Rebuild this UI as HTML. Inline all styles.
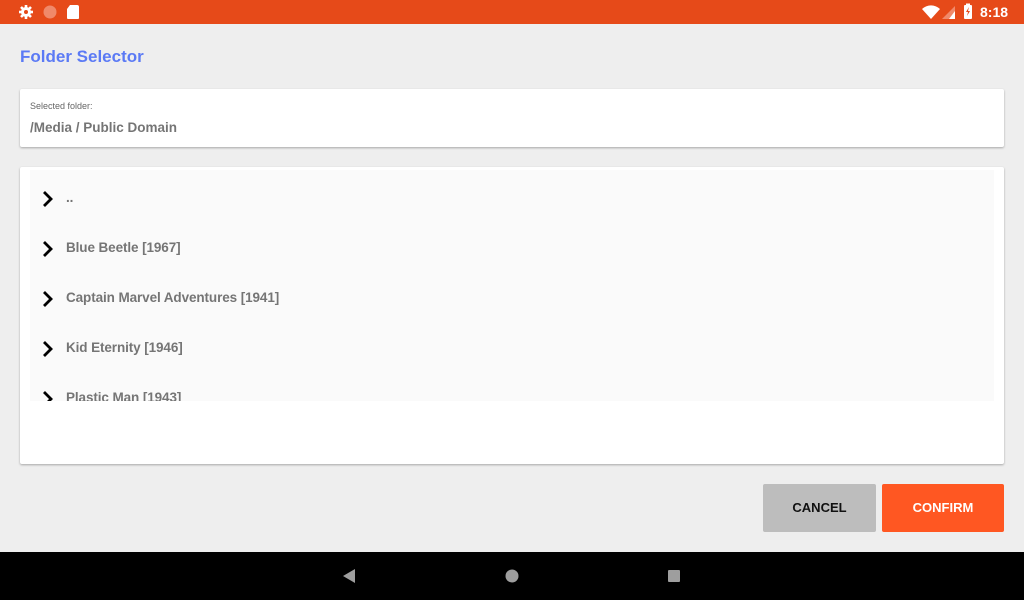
<!DOCTYPE html>
<html><head><meta charset="utf-8"><style>
*{margin:0;padding:0;box-sizing:border-box}
body{width:1024px;height:600px;background:#eeeeee;font-family:"Liberation Sans",sans-serif;position:relative;overflow:hidden}
.sb{position:absolute;left:0;top:0;width:1024px;height:24px;background:#e64a19}
.nav{position:absolute;left:0;top:552px;width:1024px;height:48px;background:#000}
.title{position:absolute;left:20px;top:47px;font-size:17px;font-weight:bold;color:#5b7af5}
.card{position:absolute;background:#fff;border-radius:2px;box-shadow:0 1px 2px rgba(0,0,0,.3)}
.item{position:absolute;left:0;width:900px;height:50px;font-size:13.5px;letter-spacing:-0.1px;font-weight:bold;color:#757575;white-space:nowrap}
.item svg{position:absolute;left:9px;top:0}
.item span{position:absolute;left:36px;top:1px}
.btn{position:absolute;top:484px;height:48px;border-radius:2px;font-size:13px;font-weight:bold;text-align:center;line-height:48px}
</style></head><body>
<div class="sb">
<svg width="1024" height="24" style="position:absolute;left:0;top:0">
<g fill="#fff">
<circle cx="26" cy="12" r="5"/>
<g stroke="#fff" stroke-width="2.6"><line x1="26" y1="5" x2="26" y2="19"/><line x1="19" y1="12" x2="33" y2="12"/><line x1="21" y1="7" x2="31" y2="17"/><line x1="31" y1="7" x2="21" y2="17"/></g>
<circle cx="26" cy="12" r="2" fill="#e64a19"/>
<circle cx="50" cy="12" r="6.5" fill="#f0896a"/>
<path d="M70 5h7a2 2 0 0 1 2 2v11a1 1 0 0 1-1 1h-10a1 1 0 0 1-1-1v-9z"/>
<path d="M922 9a13 13 0 0 1 18 0l-9 10z"/>
<path d="M955 6v13h-13z" fill="#f0896a"/>
<path d="M955 11v8h-6z"/>
<rect x="964" y="5" width="8" height="14" rx="1"/>
<rect x="966" y="3.5" width="4" height="2"/>
<path d="M969 7l-3 5h2l-1 4 3-5h-2z" fill="#e64a19"/>
</g>
<text x="980" y="17" fill="#fff" font-size="14" font-weight="bold" font-family="Liberation Sans">8:18</text>
</svg>
</div>
<div class="title">Folder Selector</div>
<div class="card" style="left:20px;top:89px;width:984px;height:58px">
<div style="position:absolute;left:10px;top:12px;font-size:9px;color:#666">Selected folder:</div>
<div style="position:absolute;left:10px;top:31px;font-size:13.5px;font-weight:bold;color:#757575">/Media / Public Domain</div>
</div>
<div class="card" style="left:20px;top:167px;width:984px;height:297px">
<div style="position:absolute;left:10px;top:3px;width:964px;height:231px;background:#fafafa;overflow:hidden">
<div class="item" style="top:19px"><svg width="20" height="20" viewBox="0 0 20 20"><path d="M5 3l7 7-7 7" fill="none" stroke="#000" stroke-width="2.8"/></svg><span>..</span></div>
<div class="item" style="top:69px"><svg width="20" height="20" viewBox="0 0 20 20"><path d="M5 3l7 7-7 7" fill="none" stroke="#000" stroke-width="2.8"/></svg><span>Blue Beetle [1967]</span></div>
<div class="item" style="top:119px"><svg width="20" height="20" viewBox="0 0 20 20"><path d="M5 3l7 7-7 7" fill="none" stroke="#000" stroke-width="2.8"/></svg><span>Captain Marvel Adventures [1941]</span></div>
<div class="item" style="top:169px"><svg width="20" height="20" viewBox="0 0 20 20"><path d="M5 3l7 7-7 7" fill="none" stroke="#000" stroke-width="2.8"/></svg><span>Kid Eternity [1946]</span></div>
<div class="item" style="top:219px"><svg width="20" height="20" viewBox="0 0 20 20"><path d="M5 3l7 7-7 7" fill="none" stroke="#000" stroke-width="2.8"/></svg><span>Plastic Man [1943]</span></div>
</div>
</div>
<div class="btn" style="left:763px;width:113px;background:#bdbdbd;color:#111">CANCEL</div>
<div class="btn" style="left:882px;width:122px;background:#ff5722;color:#fff">CONFIRM</div>
<div class="nav">
<svg width="1024" height="48" style="position:absolute;left:0;top:0">
<path d="M343 24l12-7v14z" fill="#9e9e9e"/>
<circle cx="512" cy="24" r="6.5" fill="#9e9e9e"/>
<rect x="668" y="18" width="12" height="12" rx="1" fill="#9e9e9e"/>
</svg>
</div>
</body></html>
